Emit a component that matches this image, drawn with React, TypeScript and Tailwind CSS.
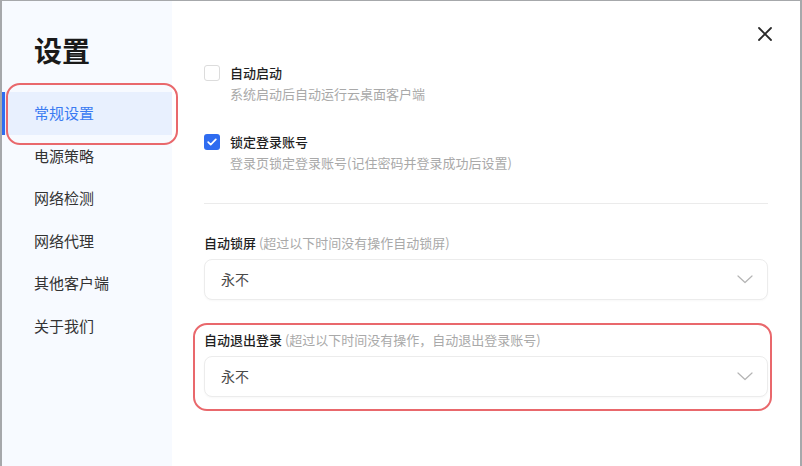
import { useState } from "react";

const menu = ["常规设置", "电源策略", "网络检测", "网络代理", "其他客户端", "关于我们"];

function Chevron() {
	return (
		<svg width="16" height="9" viewBox="0 0 16 9" fill="none">
			<path d="M1 1l7 6.5L15 1" stroke="#b4b4b4" strokeWidth="1.2" strokeLinecap="round" strokeLinejoin="round" />
		</svg>
	);
}

function Select({ value }: { value: string }) {
	return (
		<div className="mt-[6px] h-[41px] flex items-center justify-between pl-[16px] pr-[14px] rounded-[8px] border border-[#ececec] shadow-[0_1px_2px_rgba(0,0,0,0.03)] bg-white">
			<span className="text-[14px] text-[#4a4a4a]">{value}</span>
			<Chevron />
		</div>
	);
}

function CheckRow({ checked, title, desc }: { checked: boolean; title: string; desc: string }) {
	return (
		<div className="flex items-start gap-[10px]">
			{checked ? (
				<div className="w-4 h-4 rounded-[3px] bg-[#2f6cf0] flex items-center justify-center">
					<svg width="10" height="8" viewBox="0 0 10 8" fill="none">
						<path d="M1.2 4.2l2.5 2.4L8.8 1.4" stroke="white" strokeWidth="1.7" strokeLinecap="round" strokeLinejoin="round" />
					</svg>
				</div>
			) : (
				<div className="w-4 h-4 rounded-[3px] border border-[#dcdcdc] bg-white" />
			)}
			<div>
				<div className="text-[13px] leading-[16px] font-medium text-[#1f1f1f]">{title}</div>
				<div className="mt-[3px] text-[13px] leading-[20px] text-[#a9a9a9]">{desc}</div>
			</div>
		</div>
	);
}

export default function App() {
	const [active, setActive] = useState(0);

	return (
		<div className="relative w-[802px] h-[466px] flex bg-white border-t border-l-2 border-r-2 border-[#a6a8ab] overflow-hidden font-['Noto_Sans_CJK_SC','Noto_Sans',sans-serif]">
			<div className="w-[170px] bg-[#f7faff] flex flex-col">
				<h1 className="pl-[32px] pt-[32px] leading-[34px] text-[28px] font-bold text-[#1a1a1a] mb-[25px]">设置</h1>
				{menu.map((item, i) => (
					<div
						key={item}
						onClick={() => setActive(i)}
						className={
							i === active
								? "relative h-[42.5px] flex items-center pl-[32px] text-[15px] bg-[#e8f0fe] text-[#3a7bf2]"
								: "relative h-[42.5px] flex items-center pl-[32px] text-[15px] text-[#333333]"
						}
					>
						{i === active && <div className="absolute left-0 top-0 bottom-0 w-[3px] bg-[#2f6cf0]" />}
						{item}
					</div>
				))}
			</div>

			<div className="relative flex-1 pl-8 pr-8 pt-[64px]">
				<button className="absolute top-[25px] right-[27px] w-4 h-4">
					<svg width="16" height="16" viewBox="0 0 16 16" fill="none">
						<path d="M2 2l12 12M14 2L2 14" stroke="#2a2a2a" strokeWidth="1.8" strokeLinecap="round" />
					</svg>
				</button>

				<CheckRow checked={false} title="自动启动" desc="系统启动后自动运行云桌面客户端" />
				<div className="mt-[30px]">
					<CheckRow checked={true} title="锁定登录账号" desc="登录页锁定登录账号(记住密码并登录成功后设置)" />
				</div>

				<div className="mt-[30px] h-px bg-[#ebebeb]" />

				<div className="mt-[29px] text-[13px] leading-[20px]">
					<span className="font-medium text-[#1f1f1f]">自动锁屏</span>
					<span className="text-[#a9a9a9]"> (超过以下时间没有操作自动锁屏)</span>
				</div>
				<Select value="永不" />

				<div className="mt-[30px] text-[13px] leading-[20px]">
					<span className="font-medium text-[#1f1f1f]">自动退出登录</span>
					<span className="text-[#a9a9a9]"> (超过以下时间没有操作，自动退出登录账号)</span>
				</div>
				<Select value="永不" />
			</div>

			<div className="absolute left-[4px] top-[82px] w-[172px] h-[62px] rounded-[14px] border-2 border-[#e9686c] pointer-events-none" />
			<div className="absolute left-[191px] top-[322px] w-[579px] h-[88px] rounded-[14px] border-2 border-[#e9686c] pointer-events-none" />
		</div>
	);
}
